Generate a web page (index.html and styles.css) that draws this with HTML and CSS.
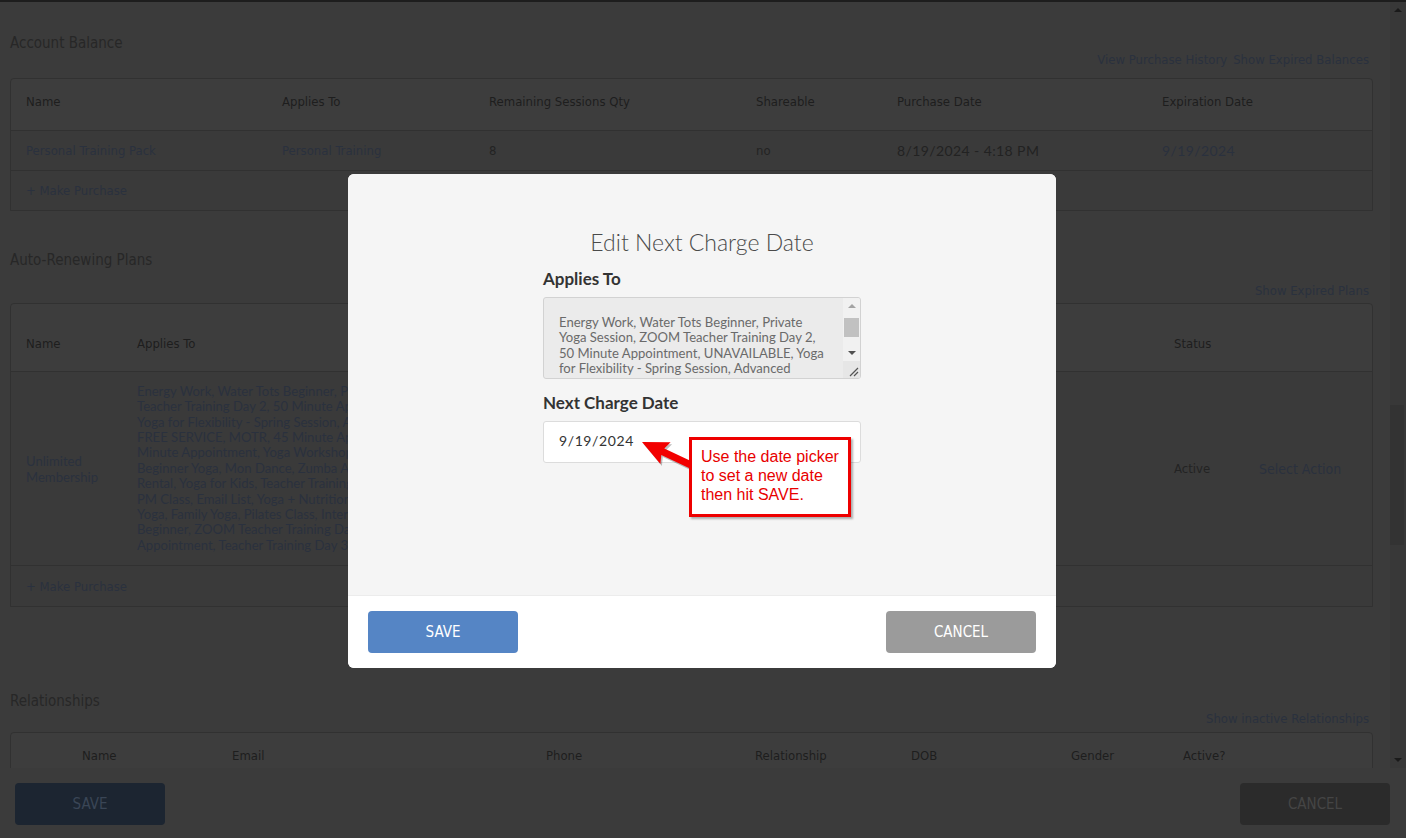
FILE: index.html
```html
<!DOCTYPE html>
<html lang="en">
<head>
<meta charset="utf-8">
<title>Edit Next Charge Date</title>
<link rel="stylesheet" href="styles.css">
</head>
<body>
<div class="app">
  <div class="scroll-area">
    <main class="content">
      <section class="section sec-balance">
        <h2 class="section-title">Account Balance</h2>
        <div class="section-links"><a class="link">View Purchase History</a><a class="link">Show Expired Balances</a></div>
        <div class="table">
          <div class="row row-head grid-balance">
            <span>Name</span><span>Applies To</span><span>Remaining Sessions Qty</span><span>Shareable</span><span>Purchase Date</span><span>Expiration Date</span>
          </div>
          <div class="row row-body grid-balance">
            <a class="link">Personal Training Pack</a><a class="link">Personal Training</a><span>8</span><span>no</span><span class="date dark">8/19/2024 - 4:18 PM</span><a class="link date">9/19/2024</a>
          </div>
          <div class="row row-foot"><a class="link">+ Make Purchase</a></div>
        </div>
      </section>

      <section class="section sec-plans">
        <h2 class="section-title">Auto-Renewing Plans</h2>
        <div class="section-links"><a class="link">Show Expired Plans</a></div>
        <div class="table">
          <div class="row row-head tall grid-plans">
            <span>Name</span><span>Applies To</span><span>Status</span><span></span>
          </div>
          <div class="row row-body plan-row grid-plans">
            <a class="link plan-name">Unlimited<br>Membership</a>
            <a class="link plan-applies">Energy Work, Water Tots Beginner, Private Yoga Session, ZOOM<br>Teacher Training Day 2, 50 Minute Appointment, UNAVAILABLE,<br>Yoga for Flexibility - Spring Session, Advanced Yoga, Intro Class,<br>FREE SERVICE, MOTR, 45 Minute Appointment, Massage, 30<br>Minute Appointment, Yoga Workshop, Hot Yoga, Aerial Yoga,<br>Beginner Yoga, Mon Dance, Zumba Adults, Studio Space<br>Rental, Yoga for Kids, Teacher Training Day 1, Wednesday 6<br>PM Class, Email List, Yoga + Nutrition, Vinyasa Flow, Yin<br>Yoga, Family Yoga, Pilates Class, Intermediate Yoga, Water Tots<br>Beginner, ZOOM Teacher Training Day 1, 60 Minute<br>Appointment, Teacher Training Day 3</a>
            <span>Active</span>
            <a class="link action">Select Action</a>
          </div>
          <div class="row row-foot plan-foot"><a class="link">+ Make Purchase</a></div>
        </div>
      </section>

      <section class="section sec-rel">
        <h2 class="section-title">Relationships</h2>
        <div class="section-links"><a class="link">Show inactive Relationships</a></div>
        <div class="table">
          <div class="row row-head grid-rel">
            <span>Name</span><span>Email</span><span>Phone</span><span>Relationship</span><span>DOB</span><span>Gender</span><span>Active?</span>
          </div>
        </div>
      </section>
    </main>
    <div class="scrollbar">
      <span class="sb-btn"><i class="tri-up"></i></span>
      <div class="sb-track"><div class="sb-thumb"></div></div>
      <span class="sb-btn"><i class="tri-down"></i></span>
    </div>
  </div>
  <footer class="page-footer">
    <button class="btn btn-save-dim">SAVE</button>
    <button class="btn btn-cancel-dim">CANCEL</button>
  </footer>
</div>

<div class="backdrop">
  <div class="modal">
    <div class="modal-body">
      <h1 class="modal-title">Edit Next Charge Date</h1>
      <div class="form">
        <label class="field-label">Applies To</label>
        <div class="textarea">
          <div class="textarea-text">Energy Work, Water Tots Beginner, Private<br>Yoga Session, ZOOM Teacher Training Day 2,<br>50 Minute Appointment, UNAVAILABLE, Yoga<br>for Flexibility - Spring Session, Advanced</div>
          <div class="ta-scrollbar">
            <span class="ta-btn"><i class="ta-tri-up"></i></span>
            <div class="ta-track"><div class="ta-thumb"></div></div>
            <span class="ta-btn"><i class="ta-tri-down"></i></span>
            <span class="ta-corner">
              <svg width="17" height="17" viewBox="0 0 17 17"><path d="M7 15 L15 7 M11 15 L15 11" stroke="#555" stroke-width="1.2" fill="none"/></svg>
            </span>
          </div>
        </div>
        <label class="field-label">Next Charge Date</label>
        <div class="input">9/19/2024</div>
      </div>
      <svg class="callout-arrow" width="65" height="45" viewBox="0 0 65 45">
        <polygon class="arrow-shadow" points="8,13 36.6,13.2 30.3,19.6 59.5,33.3 56.5,39.7 27.3,26 26.4,34.9" transform="translate(1.5,2)"/>
        <polygon class="arrow-shape" points="8,13 36.6,13.2 30.3,19.6 59.5,33.3 56.5,39.7 27.3,26 26.4,34.9"/>
      </svg>
      <div class="callout">Use the date picker<br>to set a new date<br>then hit SAVE.</div>
    </div>
    <div class="modal-footer">
      <button class="btn btn-save">SAVE</button>
      <button class="btn btn-cancel">CANCEL</button>
    </div>
  </div>
</div>
</body>
</html>
```

FILE: styles.css
```css
* { box-sizing: border-box; }

html, body {
  margin: 0;
  padding: 0;
  width: 1406px;
  height: 838px;
  overflow: hidden;
}

body {
  background: #3b3b3b;
  font-family: "DejaVu Sans Condensed", "Liberation Sans", sans-serif;
  color: #222;
}

.app {
  display: flex;
  flex-direction: column;
  height: 838px;
  border-top: 2px solid #1d1d1d;
}

.scroll-area {
  display: flex;
  height: 766px;
  overflow: hidden;
}

.content {
  flex: 1;
  padding: 31px 17px 0 10px;
  overflow: hidden;
}

/* sections */
.section-title {
  margin: 0;
  font-weight: normal;
  font-size: 15px;
  line-height: 20px;
  color: #272727;
}

.section-links {
  display: flex;
  justify-content: flex-end;
  gap: 6px;
  padding-right: 4px;
  font-size: 13px;
  line-height: 16px;
}

.sec-balance .section-links { margin-top: -1px; margin-bottom: 10px; }
.sec-plans { margin-top: 39px; }
.sec-plans .section-links { margin-top: 13px; margin-bottom: 4px; }
.sec-rel { margin-top: 84px; }
.sec-rel .section-links { margin-bottom: 5px; }

.link { color: #2a313e; text-decoration: none; }
.dark { color: #222; }

/* tables */
.table {
  border: 1px solid #313131;
  border-radius: 4px 4px 0 0;
  background: #3a3a3a;
}

.row {
  display: grid;
  align-items: center;
  padding-left: 15px;
  font-size: 13px;
  color: #232323;
}

.row + .row { border-top: 1px solid #313131; }

.row-head {
  height: 51px;
  padding-bottom: 7px;
  background: #3d3d3d;
  color: #1e1e1e;
  border-radius: 4px 4px 0 0;
}

.row-head.tall { height: 67px; padding-bottom: 0; padding-top: 11px; }

.row-body { height: 40px; }
.row-foot { height: 40px; display: flex; }
.row-foot.plan-foot { height: 41px; }

.grid-balance { grid-template-columns: 256px 207px 267px 141px 265px 1fr; }
.grid-plans { grid-template-columns: 111px 1037px 85px 1fr; }
.grid-rel { grid-template-columns: 150px 314px 209px 156px 160px 112px 1fr; padding-left: 71px; }

.date {
  font-family: "Lato", "Noto Sans", sans-serif;
  font-size: 14px;
  letter-spacing: 0.4px;
}

.row-body.plan-row { height: 194px; }
.plan-name,
.plan-applies {
  font-family: "Lato", "Noto Sans", sans-serif;
  font-size: 13.1px;
}
.plan-name { line-height: 16px; }
.plan-applies {
  line-height: 15.4px;
  white-space: nowrap;
  overflow: hidden;
}
.action { font-size: 14px; }

/* fake page scrollbar */
.scrollbar {
  width: 16px;
  display: flex;
  flex-direction: column;
  background: #383838;
}
.sb-btn { height: 16px; display: flex; align-items: center; justify-content: center; }
.sb-track { flex: 1; }
.sb-thumb { margin: 387px 2px 0 0; height: 140px; background: #333; }
.tri-up { width: 0; height: 0; border: 4px solid transparent; border-bottom: 4px solid #1a1a1a; border-top: 0; }
.tri-down { width: 0; height: 0; border: 4px solid transparent; border-top: 4px solid #1a1a1a; border-bottom: 0; }

/* page footer */
.page-footer {
  flex: 1;
  display: flex;
  justify-content: space-between;
  align-items: flex-start;
  padding: 15px 16px 0 15px;
}

.btn {
  width: 150px;
  height: 42px;
  border: 0;
  border-radius: 4px;
  font-family: "DejaVu Sans Condensed", "Liberation Sans", sans-serif;
  font-size: 15px;
  color: #fff;
  padding: 0;
}

.btn-save-dim { background: #1c2531; color: #3a4656; }
.btn-cancel-dim { background: #2b2b2b; color: #454545; }

/* modal */
.backdrop {
  position: fixed;
  inset: 0;
  display: flex;
  align-items: center;
  justify-content: center;
  padding: 4px 2px 0 0;
}

.modal {
  width: 708px;
  height: 494px;
  border-radius: 6px;
  overflow: hidden;
  background: #fff;
  display: flex;
  flex-direction: column;
}

.modal-body {
  position: relative;
  height: 422px;
  background: #f5f5f5;
  padding-top: 53px;
  border-bottom: 1px solid #ececec;
}

.modal-title {
  margin: 0;
  text-align: center;
  font-family: "Lato", "Open Sans", sans-serif;
  font-weight: 300;
  font-size: 23px;
  line-height: 30px;
  color: #4a4a4a;
}

.form {
  width: 318px;
  margin: 12px auto 0;
  display: flex;
  flex-direction: column;
  font-family: "Lato", "Noto Sans", sans-serif;
}

.field-label {
  font-weight: 700;
  font-size: 17px;
  line-height: 20px;
  color: #333;
  margin-bottom: 8px;
}

.textarea {
  height: 82px;
  display: flex;
  background: #ebebeb;
  border: 1px solid #d2d2d2;
  border-radius: 3px;
  margin-bottom: 14px;
  overflow: hidden;
}

.textarea-text {
  flex: 1;
  padding: 17px 0 0 15px;
  font-size: 13.1px;
  line-height: 15.4px;
  color: #6a6a6a;
  white-space: nowrap;
  overflow: hidden;
}

.ta-scrollbar {
  width: 17px;
  display: flex;
  flex-direction: column;
  background: #f1f1f1;
}
.ta-btn { height: 16px; display: flex; align-items: center; justify-content: center; }
.ta-track { flex: 1; }
.ta-thumb { margin: 4px 1px 0 1px; height: 19px; background: #c1c1c1; }
.ta-corner { height: 17px; background: #e6e6e6; display: block; }
.ta-corner svg { display: block; }
.ta-tri-up { width: 0; height: 0; border: 4px solid transparent; border-bottom: 4px solid #a3a3a3; border-top: 0; }
.ta-tri-down { width: 0; height: 0; border: 4px solid transparent; border-top: 4px solid #505050; border-bottom: 0; }

.input {
  height: 42px;
  display: flex;
  align-items: center;
  padding: 0 0 3px 15px;
  background: #fff;
  border: 1px solid #dcdcdc;
  border-radius: 3px;
  font-size: 14px;
  letter-spacing: 0.6px;
  color: #333;
}

/* annotation */
.callout-arrow {
  position: absolute;
  left: 286px;
  top: 255px;
}
.arrow-shape { fill: #f20000; }
.arrow-shadow { fill: rgba(0, 0, 0, 0.25); }

.callout {
  position: absolute;
  left: 341px;
  top: 263px;
  width: 162px;
  height: 80px;
  padding: 7px 0 0 9px;
  background: #fff;
  border: 3px solid #ee0000;
  box-shadow: 2px 2px 2px rgba(0, 0, 0, 0.3);
  font-family: "Liberation Sans", Arial, sans-serif;
  font-size: 16px;
  line-height: 19px;
  color: #e80000;
}

.modal-footer {
  flex: 1;
  display: flex;
  justify-content: space-between;
  align-items: flex-start;
  padding: 15px 20px 0;
  background: #fff;
}

.btn-save { background: #5585c5; }
.btn-cancel { background: #9b9b9b; }
```
